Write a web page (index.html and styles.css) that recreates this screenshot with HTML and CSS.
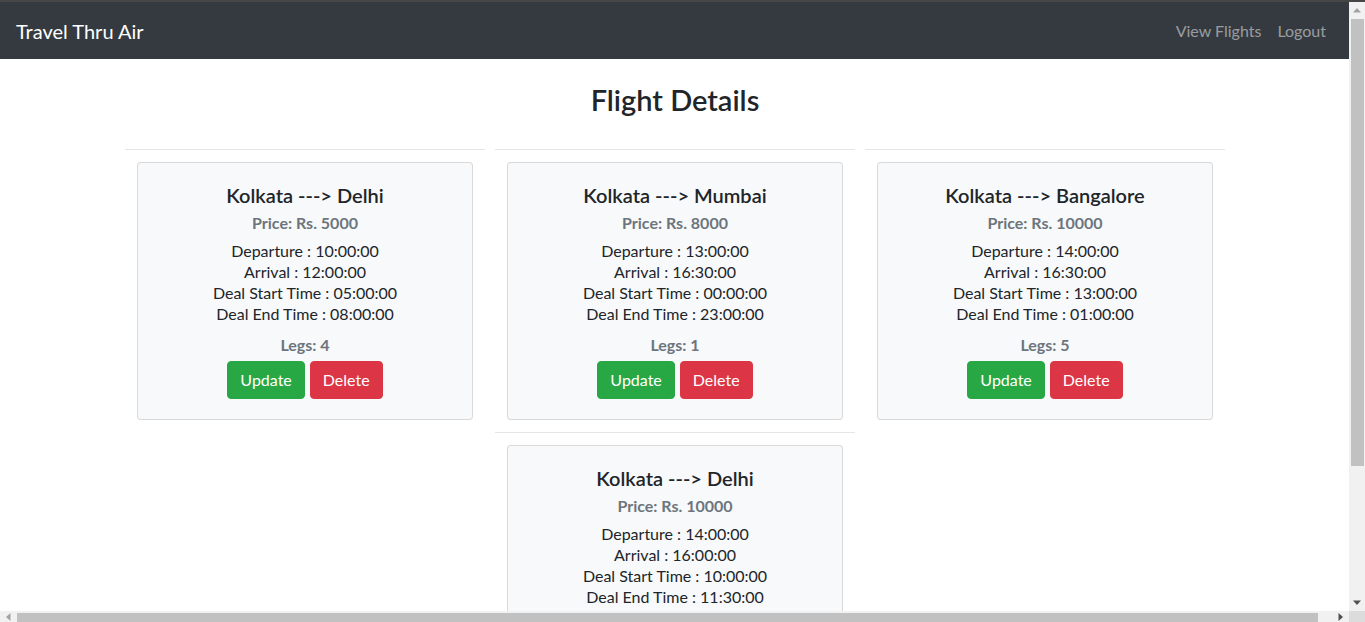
FILE: index.html
```html
<!DOCTYPE html>
<html lang="en">
<head>
<meta charset="utf-8">
<title>Travel Thru Air</title>
<link rel="stylesheet" href="styles.css">
</head>
<body>
<nav class="navbar">
  <a class="brand" href="#">Travel Thru Air</a>
  <ul class="nav-links">
    <li><a href="#">View Flights</a></li>
    <li><a href="#">Logout</a></li>
  </ul>
</nav>

<main class="container">
  <h2 class="page-title">Flight Details</h2>
  <div class="row">
    <div class="col">
      <hr class="divider">
      <div class="card">
        <h5 class="card-title">Kolkata ---&gt; Delhi</h5>
        <h6 class="card-subtitle">Price: Rs. 5000</h6>
        <div class="times">
          <div>Departure : 10:00:00</div>
          <div>Arrival : 12:00:00</div>
          <div>Deal Start Time : 05:00:00</div>
          <div>Deal End Time : 08:00:00</div>
        </div>
        <h6 class="legs">Legs: 4</h6>
        <div class="actions">
          <button class="btn btn-success">Update</button>
          <button class="btn btn-danger">Delete</button>
        </div>
      </div>
    </div>
    <div class="col">
      <hr class="divider">
      <div class="card">
        <h5 class="card-title">Kolkata ---&gt; Mumbai</h5>
        <h6 class="card-subtitle">Price: Rs. 8000</h6>
        <div class="times">
          <div>Departure : 13:00:00</div>
          <div>Arrival : 16:30:00</div>
          <div>Deal Start Time : 00:00:00</div>
          <div>Deal End Time : 23:00:00</div>
        </div>
        <h6 class="legs">Legs: 1</h6>
        <div class="actions">
          <button class="btn btn-success">Update</button>
          <button class="btn btn-danger">Delete</button>
        </div>
      </div>
    </div>
    <div class="col">
      <hr class="divider">
      <div class="card">
        <h5 class="card-title">Kolkata ---&gt; Bangalore</h5>
        <h6 class="card-subtitle">Price: Rs. 10000</h6>
        <div class="times">
          <div>Departure : 14:00:00</div>
          <div>Arrival : 16:30:00</div>
          <div>Deal Start Time : 13:00:00</div>
          <div>Deal End Time : 01:00:00</div>
        </div>
        <h6 class="legs">Legs: 5</h6>
        <div class="actions">
          <button class="btn btn-success">Update</button>
          <button class="btn btn-danger">Delete</button>
        </div>
      </div>
    </div>
    <div class="col">
      <hr class="divider">
      <div class="card">
        <h5 class="card-title">Kolkata ---&gt; Delhi</h5>
        <h6 class="card-subtitle">Price: Rs. 10000</h6>
        <div class="times">
          <div>Departure : 14:00:00</div>
          <div>Arrival : 16:00:00</div>
          <div>Deal Start Time : 10:00:00</div>
          <div>Deal End Time : 11:30:00</div>
        </div>
        <h6 class="legs">Legs: 2</h6>
        <div class="actions">
          <button class="btn btn-success">Update</button>
          <button class="btn btn-danger">Delete</button>
        </div>
      </div>
    </div>
  </div>
</main>

<div class="vscroll">
  <div class="sb-arrow">
    <svg width="8" height="5" viewBox="0 0 8 5"><polygon points="4,0 8,4.5 0,4.5" fill="#a3a3a3"/></svg>
  </div>
  <div class="sb-track-v"><div class="sb-thumb-v"></div></div>
  <div class="sb-arrow">
    <svg width="8" height="5" viewBox="0 0 8 5"><polygon points="0,0.5 8,0.5 4,5" fill="#505050"/></svg>
  </div>
</div>

<div class="hscroll">
  <div class="sb-arrow-h">
    <svg width="5" height="8" viewBox="0 0 5 8"><polygon points="0,4 4.5,0 4.5,8" fill="#a3a3a3"/></svg>
  </div>
  <div class="sb-track-h"><div class="sb-thumb-h"></div></div>
  <div class="sb-arrow-h">
    <svg width="5" height="8" viewBox="0 0 5 8"><polygon points="0.5,0 5,4 0.5,8" fill="#505050"/></svg>
  </div>
  <div class="sb-corner"></div>
</div>
</body>
</html>
```

FILE: styles.css
```css
html, body {
  overflow: hidden;
}

body {
  margin: 0;
  padding-right: 15px;
  border-top: 2px solid #464646;
  font-family: Lato, "Noto Sans", sans-serif;
  font-size: 16px;
  color: #212529;
  background: #fff;
}

/* Navbar */
.navbar {
  display: flex;
  align-items: center;
  justify-content: space-between;
  background: #343a40;
  padding: 9px 16px 8px;
}

.brand {
  color: #fff;
  text-decoration: none;
  font-size: 20px;
  line-height: 30px;
  padding: 5px 0;
}

.nav-links {
  display: flex;
  list-style: none;
  margin: 0;
  padding: 0;
}

.nav-links a {
  display: block;
  padding: 8px;
  color: rgba(255, 255, 255, 0.5);
  text-decoration: none;
  line-height: 24px;
}

/* Content */
.container {
  width: 1110px;
  margin: 0 auto;
}

.page-title {
  text-align: center;
  font-size: 29px;
  font-weight: 600;
  line-height: 38px;
  margin: 22px 0 30px;
}

.row {
  display: flex;
  flex-wrap: wrap;
  justify-content: center;
}

.col {
  width: 370px;
  box-sizing: border-box;
  padding: 0 5px;
}

.divider {
  margin: 0;
  border: 0;
  border-top: 1px solid rgba(0, 0, 0, 0.1);
}

.card {
  margin: 12px;
  padding: 20px;
  background: #f8f9fa;
  border: 1px solid rgba(0, 0, 0, 0.125);
  border-radius: 4px;
  text-align: center;
}

.card-title {
  margin: 0 0 6px;
  font-size: 20px;
  font-weight: 600;
  line-height: 24px;
}

.card-subtitle,
.legs {
  margin: 0;
  font-size: 16px;
  font-weight: 700;
  line-height: 19px;
  color: #6c757d;
}

.times {
  margin: 8px 0 11px;
  line-height: 21px;
}

.legs {
  margin-bottom: 7px;
}

.actions {
  display: flex;
  justify-content: center;
  gap: 5px;
}

.btn {
  font-family: inherit;
  font-size: 16px;
  line-height: 24px;
  padding: 6px 12px;
  border: 1px solid transparent;
  border-radius: 4px;
  color: #fff;
  cursor: pointer;
}

.btn-success {
  background: #28a745;
  border-color: #28a745;
}

.btn-danger {
  background: #dc3545;
  border-color: #dc3545;
}

/* Drawn scrollbars (overlay the viewport edges) */
.vscroll {
  position: fixed;
  top: 2px;
  right: 0;
  width: 16px;
  height: 609px;
  background: #f1f1f1;
  display: flex;
  flex-direction: column;
}

.sb-arrow {
  height: 17px;
  display: flex;
  align-items: center;
  justify-content: center;
}

.sb-track-v {
  flex: 1;
  padding: 0 1px 0 2px;
}

.sb-thumb-v {
  height: 447px;
  background: #c1c1c1;
}

.hscroll {
  position: fixed;
  left: 0;
  top: 611px;
  width: 100%;
  height: 17px;
  background: #f1f1f1;
  display: flex;
}

.sb-arrow-h {
  width: 17px;
  display: flex;
  align-items: flex-start;
  justify-content: center;
  padding-top: 2px;
}

.sb-track-h {
  flex: 1;
  padding-top: 2px;
}

.sb-thumb-h {
  width: 1301px;
  height: 13px;
  background: #c1c1c1;
}

.sb-corner {
  width: 16px;
  background: #dcdcdc;
}
```
